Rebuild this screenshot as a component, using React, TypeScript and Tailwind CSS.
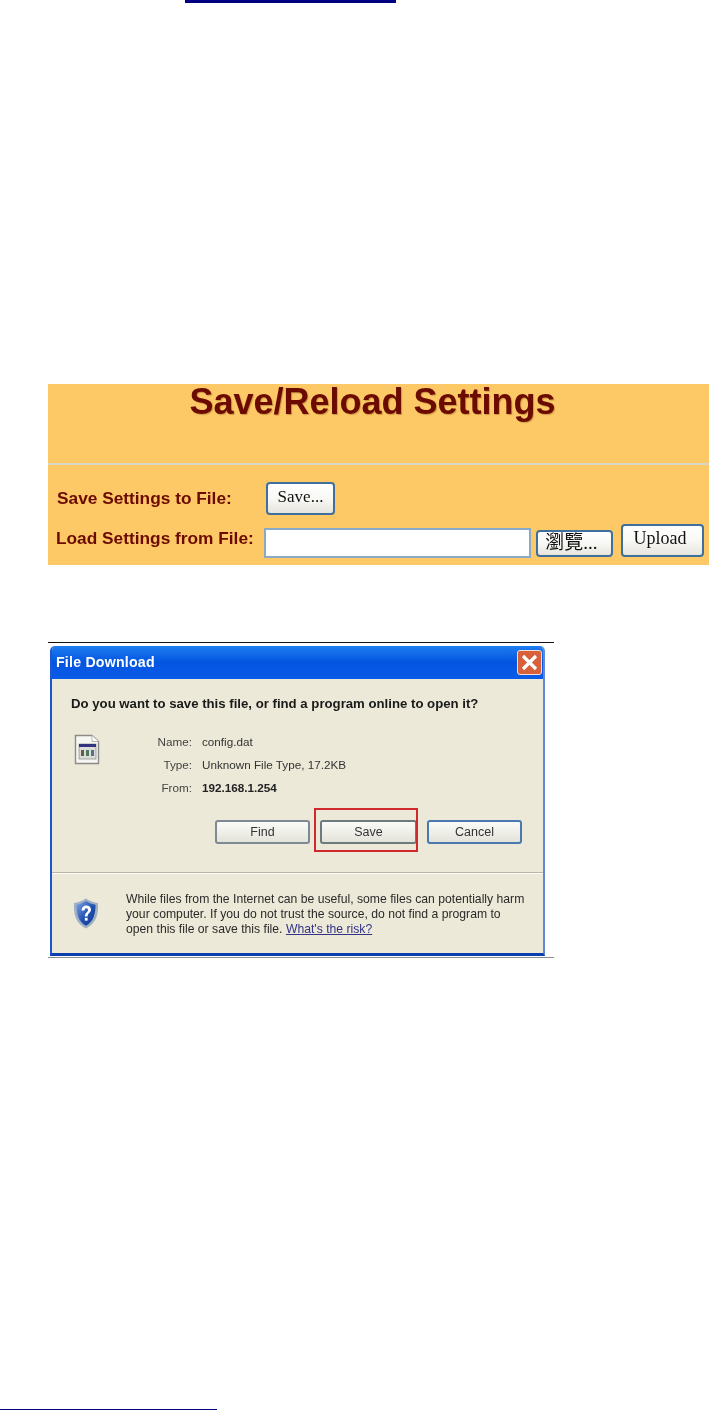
import type { ReactNode } from "react";

function PanelButton({ label, className }: { label: string; className: string }) {
  return (
    <div
      className={`flex items-center justify-center rounded-[4px] border-2 border-[#3f6f9c] bg-gradient-to-b from-white via-[#f8f8f5] to-[#e6e5dd] font-['Liberation_Serif','Noto_Sans_CJK_TC',serif] text-[#111] ${className}`}
    >
      {label}
    </div>
  );
}

function DialogButton({ label, className, children }: { label: string; className: string; children?: ReactNode }) {
  return (
    <div
      className={`relative flex h-[24px] items-center justify-center rounded-[3px] border-2 bg-gradient-to-b from-[#fbfbf8] to-[#e4e3da] text-[12.5px] text-[#333] ${className}`}
    >
      {label}
      {children}
    </div>
  );
}

function FileRow({ name, value, bold }: { name: string; value: string; bold?: boolean }) {
  return (
    <div className="flex items-center gap-[10px]">
      <span className="w-[72px] text-right text-[#444]">{name}</span>
      <span className={bold ? "font-bold text-[#222]" : "text-[#333]"}>{value}</span>
    </div>
  );
}

function FileIcon() {
  return (
    <svg width="26" height="31" viewBox="0 0 26 31" className="mt-[1px] shrink-0">
      <path d="M1.500 1.500H18L24.500 7.500V29.500H1.500Z" fill="#f6f6f2" stroke="#8b8b88" strokeWidth="1.400" />
      <path d="M18 1.500V7.500H24.500" fill="#fff" stroke="#b5b5b0" />
      <rect x="5" y="10" width="17" height="15" fill="#dcdcd8" stroke="#77777a" strokeWidth=".6" />
      <rect x="5" y="10" width="17" height="3" fill="#33337f" />
      <rect x="7" y="16" width="3" height="6" fill="#6b5a4a" />
      <rect x="12" y="16" width="3" height="6" fill="#4a7a5c" />
      <rect x="17" y="16" width="3" height="6" fill="#5a6e8a" />
    </svg>
  );
}

function ShieldIcon() {
  return (
    <svg width="26" height="31" viewBox="0 0 26 31" className="shrink-0">
      <defs>
        <linearGradient id="sh" x1="0" y1="0" x2="1" y2="1">
          <stop offset="0" stopColor="#7fa6e6" />
          <stop offset=".55" stopColor="#1f4fb0" />
          <stop offset="1" stopColor="#163a8c" />
        </linearGradient>
      </defs>
      <path d="M13 .5C9 3 5 4.500 1 5C.5 15 2 25 13 30.500C24 25 25.500 15 25 5C21 4.500 17 3 13 .5Z" fill="#9fb0c4" />
      <path d="M13 3C10 5 6.500 6.300 3.500 6.800C3.500 15 5 23.500 13 27.800C21 23.500 22.500 15 22.500 6.800C19.500 6.300 16 5 13 3Z" fill="url(#sh)" />
      <path d="M8.500 12.500C8.700 9 10.700 7.500 13.300 7.500C16.200 7.500 18 9.300 18 11.600C18 15.200 14.600 15 14.600 18.500H11.800C11.800 14.500 15 14.500 15 12C15 11 14.300 10.300 13.300 10.300C12.200 10.300 11.600 11.100 11.500 12.500Z" fill="#fff" />
      <rect x="11.800" y="19.800" width="2.800" height="2.800" fill="#fff" />
    </svg>
  );
}

export default function App() {
  return (
    <div className="flex h-[1410px] flex-col overflow-hidden bg-white font-['Liberation_Sans',sans-serif]">
      <div className="ml-[185px] h-[3px] w-[211px] bg-[#000080]" />

      <div className="ml-[48px] mt-[381px] h-[181px] w-[661px] bg-[#fdc966] text-[#6b0a00] blur-[0.4px]">
        <div className="flex h-[81px] justify-center border-b-[2px] border-[#d9d6c8]">
          <h1 className="ml-[-12px] text-[36px] leading-[36px] font-bold [text-shadow:1px_1px_1px_rgba(120,60,0,.35)]">
            Save/Reload Settings
          </h1>
        </div>
        <div className="flex items-center pl-[9px] pt-[17px]">
          <span className="w-[209px] text-[17.3px] font-bold">Save Settings to File:</span>
          <PanelButton label="Save..." className="h-[33px] w-[69px] pb-[3px] text-[17px]" />
        </div>
        <div className="flex items-end pl-[8px] pt-[9px]">
          <span className="w-[208px] pb-[5px] text-[17.3px] font-bold">Load Settings from File:</span>
          <div className="mb-[-1px] h-[30px] w-[267px] border-2 border-[#8aa9c6] bg-white" />
          <PanelButton label="瀏覽..." className="ml-[5px] h-[27px] w-[77px] pb-[3px] pr-[6px] text-[19px] leading-none" />
          <PanelButton label="Upload" className="ml-[8px] h-[33px] w-[83px] pb-[5px] pr-[5px] text-[18px]" />
        </div>
      </div>

      <div className="ml-[48px] mt-[77px] h-[316px] w-[506px] border-y border-t-[#111] border-b-[#8c8c8c] pl-[2px] pt-[3px]">
        <div className="h-[310px] w-[495px] overflow-hidden rounded-t-[5px] border-x-2 border-b-[3px] border-x-[#1b57d0] border-b-[#0c3fae] border-r-[#5f8adb] bg-[#ece9d8] text-[11.7px] blur-[0.4px]">
          <div className="-mx-[2px] flex h-[33px] items-center justify-between bg-gradient-to-b from-[#1f7df0] via-[#0454e0] to-[#0a5ce8] pl-[6px] pr-[3px]">
            <span className="text-[14.2px] font-bold tracking-[.2px] text-white">File Download</span>
            <div className="flex h-[25px] w-[25px] items-center justify-center rounded-[3px] border border-[#f0e0d8] bg-[#d8603a]">
              <svg width="17" height="17" viewBox="0 0 17 17">
                <path d="M2 2L15 15M15 2L2 15" stroke="#fff" strokeWidth="3.2" />
              </svg>
            </div>
          </div>

          <div className="pl-[19px] pt-[17px] text-[13.2px] leading-[16px] font-bold text-[#1a1a1a]">
            Do you want to save this file, or find a program online to open it?
          </div>

          <div className="flex pl-[22px] pt-[21px]">
            <FileIcon />
            <div className="ml-[20px] flex flex-col gap-[7px] pt-[1px] leading-[16px]">
              <FileRow name="Name:" value="config.dat" />
              <FileRow name="Type:" value="Unknown File Type, 17.2KB" />
              <FileRow name="From:" value="192.168.1.254" bold />
            </div>
          </div>

          <div className="flex pl-[163px] pt-[24px]">
            <DialogButton label="Find" className="w-[95px] border-[#7d8a96]" />
            <DialogButton label="Save" className="ml-[10px] w-[97px] border-[#6f7a7c]">
              <div className="absolute -bottom-[10px] -left-[8px] -right-[3px] -top-[14px] border-2 border-[#d0282c]" />
            </DialogButton>
            <DialogButton label="Cancel" className="ml-[10px] w-[95px] border-[#4a78b0]" />
          </div>

          <div className="mt-[28px] border-t border-[#b8b5a4] shadow-[0_1px_0_#fff]" />

          <div className="flex pl-[21px] pt-[25px]">
            <ShieldIcon />
            <p className="ml-[27px] mt-[-6px] whitespace-nowrap text-[12.2px] leading-[15px] text-[#2a2a2a]">
              While files from the Internet can be useful, some files can potentially harm
              <br />
              your computer. If you do not trust the source, do not find a program to
              <br />
              open this file or save this file. <span className="text-[#333388] underline">What's the risk?</span>
            </p>
          </div>
        </div>
      </div>

      <div className="mt-auto h-[1px] w-[217px] bg-[#000080]" />
    </div>
  );
}
